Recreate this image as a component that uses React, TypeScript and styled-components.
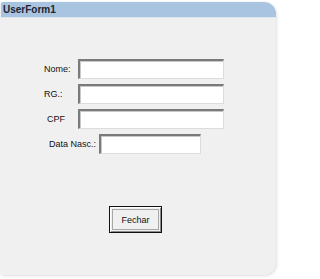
import styled, { createGlobalStyle } from "styled-components";

const GlobalStyle = createGlobalStyle`
  html, body {
    margin: 0;
    padding: 0;
    background: #ffffff;
  }
  body {
    font-family: "Liberation Sans", Arial, sans-serif;
  }
`;

const fields = [
	{ label: "Nome:", left: 44, labelWidth: 34, width: 146 },
	{ label: "RG.:", left: 44, labelWidth: 34, width: 146 },
	{ label: "CPF", left: 47, labelWidth: 31, width: 146 },
	{ label: "Data Nasc.:", left: 49, labelWidth: 50, width: 102 },
];

function App() {
	return (
		<>
			<GlobalStyle />
			<Page>
				<Window>
					<TitleBar>UserForm1</TitleBar>
					<Body>
						<Form>
							{fields.map((f) => (
								<Row key={f.label} $left={f.left}>
									<Label $width={f.labelWidth}>{f.label}</Label>
									<TextBox $width={f.width} />
								</Row>
							))}
						</Form>
						<ButtonRow>
							<Button type="button">
								<ButtonInner>Fechar</ButtonInner>
							</Button>
						</ButtonRow>
					</Body>
				</Window>
			</Page>
		</>
	);
}

const Page = styled.div`
  width: 280px;
  height: 279px;
  padding: 2px 0 0 1px;
  box-sizing: border-box;
`;

const Window = styled.div`
  width: 275px;
  height: 273px;
  display: flex;
  flex-direction: column;
  background: #f0f0f0;
  border-radius: 2px 12px 12px 2px;
  box-shadow: 1px 1px 3px rgba(0, 0, 0, 0.12), -1px 0 2px rgba(0, 0, 0, 0.06);
  overflow: hidden;
`;

const TitleBar = styled.div`
  height: 15px;
  flex-shrink: 0;
  display: flex;
  align-items: center;
  padding-left: 2px;
  background: #a9c4e1;
  border-bottom: 1px solid #dde6ef;
  color: #1b2430;
  font-size: 10px;
  font-weight: bold;
`;

const Body = styled.div`
  flex: 1;
  display: flex;
  flex-direction: column;
  padding-top: 41px;
`;

const Form = styled.div`
  display: flex;
  flex-direction: column;
  gap: 5px;
`;

const Row = styled.div<{ $left: number }>`
  display: flex;
  align-items: center;
  padding-left: ${(p) => p.$left - 1}px;
`;

const Label = styled.span<{ $width: number }>`
  width: ${(p) => p.$width}px;
  font-size: 9px;
  color: #111;
`;

const TextBox = styled.div<{ $width: number }>`
  width: ${(p) => p.$width}px;
  height: 20px;
  box-sizing: border-box;
  background: #ffffff;
  border-top: 2px solid #7a7a7a;
  border-left: 2px solid #7a7a7a;
  border-right: 1px solid #dcdcdc;
  border-bottom: 1px solid #dcdcdc;
  box-shadow: inset 1px 1px 0 #c8c8c8;
`;

const ButtonRow = styled.div`
  display: flex;
  padding: 52px 0 0 108px;
`;

const Button = styled.button`
  width: 53px;
  height: 27px;
  padding: 2px;
  margin: 0;
  box-sizing: border-box;
  background: #f0f0f0;
  border: 1px solid #111;
  box-shadow: inset 1px 1px 0 #ffffff, inset -1px -1px 0 #8a8a8a;
  display: flex;
  cursor: pointer;
`;

const ButtonInner = styled.span`
  flex: 1;
  display: flex;
  align-items: center;
  justify-content: center;
  border: 1px solid #a8a8a8;
  font-family: "Liberation Sans", Arial, sans-serif;
  font-size: 9px;
  color: #111;
`;

export default App;
